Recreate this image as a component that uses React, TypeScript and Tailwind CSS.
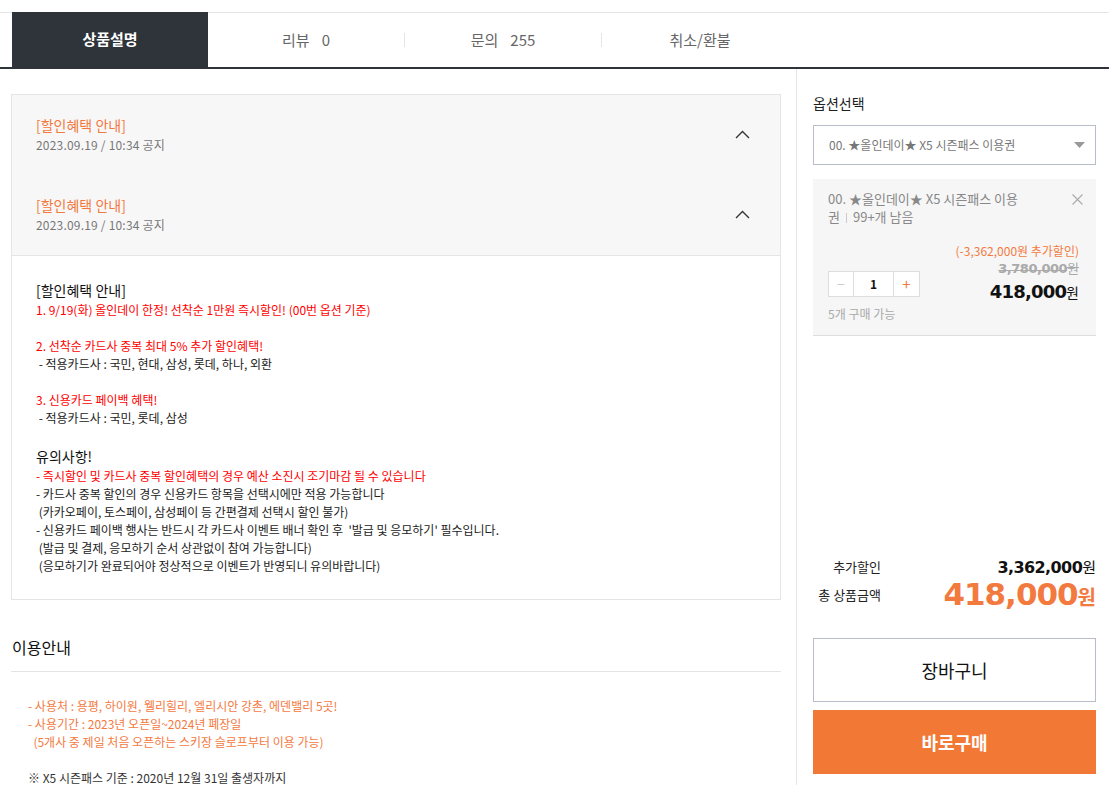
import React from "react";

const KR = { fontFamily: '"Noto Sans CJK KR", "Noto Sans", sans-serif' };

function Chevron() {
  return (
    <svg width="15" height="9" viewBox="0 0 15 9" fill="none">
      <path d="M1 8 L7.5 1.5 L14 8" stroke="#333" strokeWidth="1.4" />
    </svg>
  );
}

function NoticeItem() {
  return (
    <div className="flex h-[80px] items-start justify-between pl-[24px] pr-[30px] pt-[20px]">
      <div>
        <div className="text-[14px] leading-[20px] text-[#f37a3f]">[할인혜택 안내]</div>
        <div className="text-[12px] leading-[20px] text-[#777] tracking-[0.2px]">2023.09.19 / 10:34 공지</div>
      </div>
      <div className="mt-[15px]">
        <Chevron />
      </div>
    </div>
  );
}

export default function App() {
  return (
    <div className="w-[1109px] bg-white pt-3 text-[#222]" style={KR}>
      {/* tabs */}
      <div className="border-t border-[#e5e5e5] border-b-2 border-b-[#2f333a]">
        <div className="flex h-[54px] pl-3">
          <div className="-mt-px flex h-[55px] w-[196px] items-center justify-center bg-[#2f333a] text-[15px] font-bold text-white">
            상품설명
          </div>
          <div className="flex w-[196px] items-center justify-center text-[15px] text-[#666]">
            리뷰<span className="ml-3">0</span>
          </div>
          <div className="my-auto h-[14px] w-px bg-[#e5e5e5]" />
          <div className="flex w-[196px] items-center justify-center text-[15px] text-[#666]">
            문의<span className="ml-3">255</span>
          </div>
          <div className="my-auto h-[14px] w-px bg-[#e5e5e5]" />
          <div className="flex w-[196px] items-center justify-center text-[15px] text-[#666]">
            취소/환불
          </div>
        </div>
      </div>

      <div className="flex">
        {/* left */}
        <div className="w-[781px] pl-[11px]">
          <div className="mt-[25px] border border-[#e5e5e5]">
            <div className="border-b border-[#e5e5e5] bg-[#f7f7f7]">
              <NoticeItem />
              <NoticeItem />
            </div>
            <div className="px-[24px] pb-[24px] pt-[23px]">
              <div className="text-[14px] leading-[22px] text-[#111]">[할인혜택 안내]</div>
              <div className="text-[12px] leading-[18px]">
                <div className="text-[#ff0000]">1. 9/19(화) 올인데이 한정! 선착순 1만원 즉시할인! (00번 옵션 기준)</div>
                <div className="h-[18px]" />
                <div className="text-[#ff0000]">2. 선착순 카드사 중복 최대 5% 추가 할인혜택!</div>
                <div className="text-[#222]">&nbsp;- 적용카드사 : 국민, 현대, 삼성, 롯데, 하나, 외환</div>
                <div className="h-[18px]" />
                <div className="text-[#ff0000]">3. 신용카드 페이백 혜택!</div>
                <div className="text-[#222]">&nbsp;- 적용카드사 : 국민, 롯데, 삼성</div>
                <div className="h-[18px]" />
              </div>
              <div className="text-[14px] leading-[22px] text-[#111]">유의사항!</div>
              <div className="text-[12px] leading-[18px] text-[#222]">
                <div className="text-[#ff0000]">- 즉시할인 및 카드사 중복 할인혜택의 경우 예산 소진시 조기마감 될 수 있습니다</div>
                <div>- 카드사 중복 할인의 경우 신용카드 항목을 선택시에만 적용 가능합니다</div>
                <div>&nbsp;(카카오페이, 토스페이, 삼성페이 등 간편결제 선택시 할인 불가)</div>
                <div>- 신용카드 페이백 행사는 반드시 각 카드사 이벤트 배너 확인 후 &nbsp;'발급 및 응모하기' 필수입니다.</div>
                <div>&nbsp;(발급 및 결제, 응모하기 순서 상관없이 참여 가능합니다)</div>
                <div>&nbsp;(응모하기가 완료되어야 정상적으로 이벤트가 반영되니 유의바랍니다)</div>
              </div>
            </div>
          </div>

          <div className="mt-[35px] border-b border-[#e5e5e5] pb-[12px] pl-px text-[16px] leading-[24px] text-[#111]">
            이용안내
          </div>
          <div className="pl-[17px] pt-[25px] text-[12px] leading-[18px]">
            <div className="text-[#f37a3f]">- 사용처 : 용평, 하이원, 웰리힐리, 엘리시안 강촌, 에덴밸리 5곳!</div>
            <div className="text-[#f37a3f]">- 사용기간 : 2023년 오픈일~2024년 폐장일</div>
            <div className="text-[#f37a3f]">&nbsp;&nbsp;(5개사 중 제일 처음 오픈하는 스키장 슬로프부터 이용 가능)</div>
            <div className="h-[18px]" />
            <div className="text-[#333]">※ X5 시즌패스 기준 : 2020년 12월 31일 출생자까지</div>
          </div>
        </div>

        {/* right */}
        <div className="ml-[15px] h-[716px] w-[313px] border-l border-[#e5e5e5] pl-[16px] pr-[13px] pt-[23px]">
          <div className="text-[14px] leading-[22px] text-[#222]">옵션선택</div>
          <div className="mt-[11px] flex h-[40px] items-center justify-between border border-[#b8bec7] pl-[15px] pr-[10px]">
            <span className="text-[12px] text-[#777]">00. ★올인데이★ X5 시즌패스 이용권</span>
            <svg width="11" height="6" viewBox="0 0 11 6">
              <path d="M0 0 L11 0 L5.5 6 Z" fill="#999" />
            </svg>
          </div>

          <div className="mt-[14px] border-b border-[#dddddd] bg-[#f6f6f6] pb-[12px] pl-[15px] pr-[17px] pt-[11px]">
            <div className="flex items-start justify-between">
              <div className="w-[196px] break-all text-[13px] leading-[18px] text-[#888]">
                00. ★올인데이★ X5 시즌패스 이용권
                <span className="mx-[6px] inline-block h-[10px] w-px bg-[#ccc] align-middle" />
                99+개 남음
              </div>
              <svg className="mr-[-4px] mt-[4px]" width="11" height="11" viewBox="0 0 11 11">
                <path d="M0.5 0.5 L10.5 10.5 M10.5 0.5 L0.5 10.5" stroke="#aaa" strokeWidth="1.1" />
              </svg>
            </div>
            <div className="mt-[16px] text-right text-[12px] leading-[18px] text-[#f37a3f]">(-3,362,000원 추가할인)</div>
            <div className="flex items-start justify-between">
              <div className="mt-[11px] flex h-[26px] border border-[#dddddd] bg-white">
                <div className="flex w-[24px] items-center justify-center text-[14px] text-[#ccc]">−</div>
                <div className="flex w-[41px] items-center justify-center border-x border-[#dddddd] text-[12px] font-bold text-[#111]">1</div>
                <div className="flex w-[25px] items-center justify-center text-[15px] text-[#f37a3f]">+</div>
              </div>
              <div className="text-right">
                <div className="text-[13px] font-bold leading-[16px] text-[#aaa] line-through">
                  <span style={{ fontFamily: '"DejaVu Sans", sans-serif', letterSpacing: "-0.5px" }}>3,780,000</span>
                  <span className="font-normal">원</span>
                </div>
                <div className="mt-[2px] text-[18px] font-bold leading-[22px] text-[#111]">
                  <span style={{ fontFamily: '"DejaVu Sans", sans-serif', letterSpacing: "-0.8px" }}>418,000</span>
                  <span className="text-[14px] font-normal">원</span>
                </div>
              </div>
            </div>
            <div className="mt-[2px] text-[12px] leading-[18px] text-[#aaa]">5개 구매 가능</div>
          </div>

          <div className="mt-[219px] flex items-center justify-between">
            <div className="w-[68px] text-right text-[13px] leading-[22px] text-[#222]">추가할인</div>
            <div className="text-[16px] font-bold leading-[22px] text-[#111]">
              <span style={{ fontFamily: '"DejaVu Sans", sans-serif', letterSpacing: "-0.6px" }}>3,362,000</span>
              <span className="text-[15px] font-normal">원</span>
            </div>
          </div>
          <div className="-mt-px flex items-start justify-between">
            <div className="w-[68px] pt-[6px] text-right text-[13px] leading-[22px] text-[#222]">총 상품금액</div>
            <div className="font-bold leading-[32px] text-[#f37a3f]">
              <span className="text-[31px]" style={{ fontFamily: '"DejaVu Sans", sans-serif', letterSpacing: "-1px" }}>418,000</span>
              <span className="text-[20px]">원</span>
            </div>
          </div>

          <div className="mt-[24px] flex h-[64px] items-center justify-center border border-[#b8bec7] text-[18px] text-[#111]">
            장바구니
          </div>
          <div className="mt-[8px] flex h-[64px] items-center justify-center bg-[#f27935] text-[18px] font-bold text-white">
            바로구매
          </div>
        </div>
      </div>
    </div>
  );
}
